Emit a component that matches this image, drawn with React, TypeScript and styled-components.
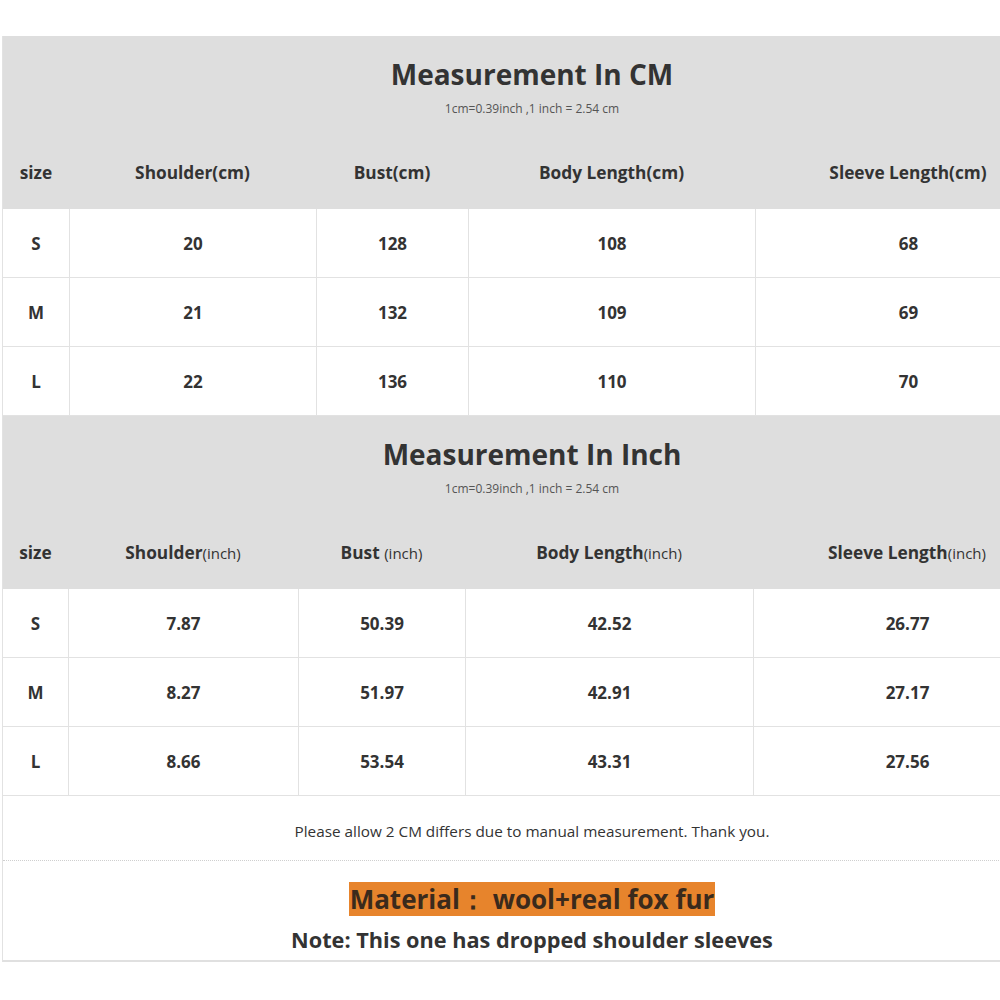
import React from 'react';
import styled, { createGlobalStyle } from 'styled-components';

// ----------
// Style
// ----------

const GlobalStyle = createGlobalStyle`
  html, body {
    margin: 0;
    padding: 0;
    background: #ffffff;
    overflow: hidden;
  }
  body {
    font-family: "Open Sans", "Liberation Sans", sans-serif;
    color: #333333;
  }
`;

const Sheet = styled.div`
  width: 1058px;
  margin: 36px 0 0 2px;
  border-left: 1px solid #e2e2e2;
  border-bottom: 2px solid #e0e0e0;
`;

const TitleBlock = styled.div`
  background: #dedede;
  display: flex;
  flex-direction: column;
  align-items: center;
  height: 104px;
  padding-top: 20px;
  box-sizing: border-box;
`;

const Title = styled.div`
  font-size: 28px;
  font-weight: 700;
  color: #333;
  line-height: 36px;
`;

const Subtitle = styled.div`
  font-size: 12px;
  color: #555;
  margin-top: 9px;
  line-height: 16px;
`;

const Grid = styled.div<{ cols: string }>`
  display: grid;
  grid-template-columns: ${(p) => p.cols};
`;

const HeadCell = styled.div`
  background: #dedede;
  height: 69px;
  padding-bottom: 5px;
  box-sizing: border-box;
  display: flex;
  align-items: center;
  justify-content: center;
  font-size: 17.3px;
  font-weight: 700;
  color: #333;
  white-space: nowrap;
`;

const Unit = styled.span`
  font-weight: 400;
  font-size: 15px;
`;

const Cell = styled.div<{ first?: boolean }>`
  height: 69px;
  display: flex;
  align-items: center;
  justify-content: center;
  font-size: 17px;
  font-weight: 700;
  color: #333;
  border-bottom: 1px solid #e2e2e2;
  border-left: ${(p) => (p.first ? 'none' : '1px solid #e2e2e2')};
  box-sizing: border-box;
`;

const NoteRow = styled.div`
  height: 65px;
  padding-top: 5px;
  display: flex;
  align-items: center;
  justify-content: center;
  font-size: 15.3px;
  color: #333;
  border-bottom: 1px dotted #cfcfcf;
  box-sizing: border-box;
`;

const MaterialBlock = styled.div`
  height: 99px;
  display: flex;
  flex-direction: column;
  align-items: center;
  padding-top: 21px;
  box-sizing: border-box;
`;

const Highlight = styled.span`
  background: #e7842c;
  color: #3a2a1c;
  font-size: 26px;
  font-weight: 700;
  line-height: 34px;
  padding: 0 1px;
`;

const NoteLine = styled.div`
  font-size: 21.7px;
  font-weight: 700;
  color: #333;
  margin-top: 9px;
  line-height: 30px;
`;

// ----------
// Data
// ----------

type Table = {
  title: string;
  cols: string;
  inch: boolean;
  headers: string[];
  rows: string[][];
};

const tables: Table[] = [
  {
    title: 'Measurement In CM',
    cols: '66px 247px 152px 287px 306px',
    inch: false,
    headers: ['Shoulder(cm)', 'Bust(cm)', 'Body Length(cm)', 'Sleeve Length(cm)'],
    rows: [
      ['S', '20', '128', '108', '68'],
      ['M', '21', '132', '109', '69'],
      ['L', '22', '136', '110', '70'],
    ],
  },
  {
    title: 'Measurement In Inch',
    cols: '65px 230px 167px 288px 308px',
    inch: true,
    headers: ['Shoulder', 'Bust ', 'Body Length', 'Sleeve Length'],
    rows: [
      ['S', '7.87', '50.39', '42.52', '26.77'],
      ['M', '8.27', '51.97', '42.91', '27.17'],
      ['L', '8.66', '53.54', '43.31', '27.56'],
    ],
  },
];

// ----------

const SizeTable: React.FC<{ table: Table }> = ({ table }) => (
  <>
    <TitleBlock>
      <Title>{table.title}</Title>
      <Subtitle>1cm=0.39inch ,1 inch = 2.54 cm</Subtitle>
    </TitleBlock>
    <Grid cols={table.cols}>
      <HeadCell>size</HeadCell>
      {table.headers.map((h) => (
        <HeadCell key={h}>
          <span style={{ whiteSpace: 'pre' }}>
            {h}
            {table.inch && <Unit>(inch)</Unit>}
          </span>
        </HeadCell>
      ))}
      {table.rows.map((row) =>
        row.map((v, i) => (
          <Cell key={`${row[0]}-${i}`} first={i === 0}>
            {v}
          </Cell>
        )),
      )}
    </Grid>
  </>
);

const App: React.FC = () => (
  <>
    <GlobalStyle />
    <Sheet>
      {tables.map((t) => (
        <SizeTable key={t.title} table={t} />
      ))}
      <NoteRow>Please allow 2 CM differs due to manual measurement. Thank you.</NoteRow>
      <MaterialBlock>
        <Highlight>Material：&nbsp;wool+real fox fur</Highlight>
        <NoteLine>Note: This one has dropped shoulder sleeves</NoteLine>
      </MaterialBlock>
    </Sheet>
  </>
);

export default App;
